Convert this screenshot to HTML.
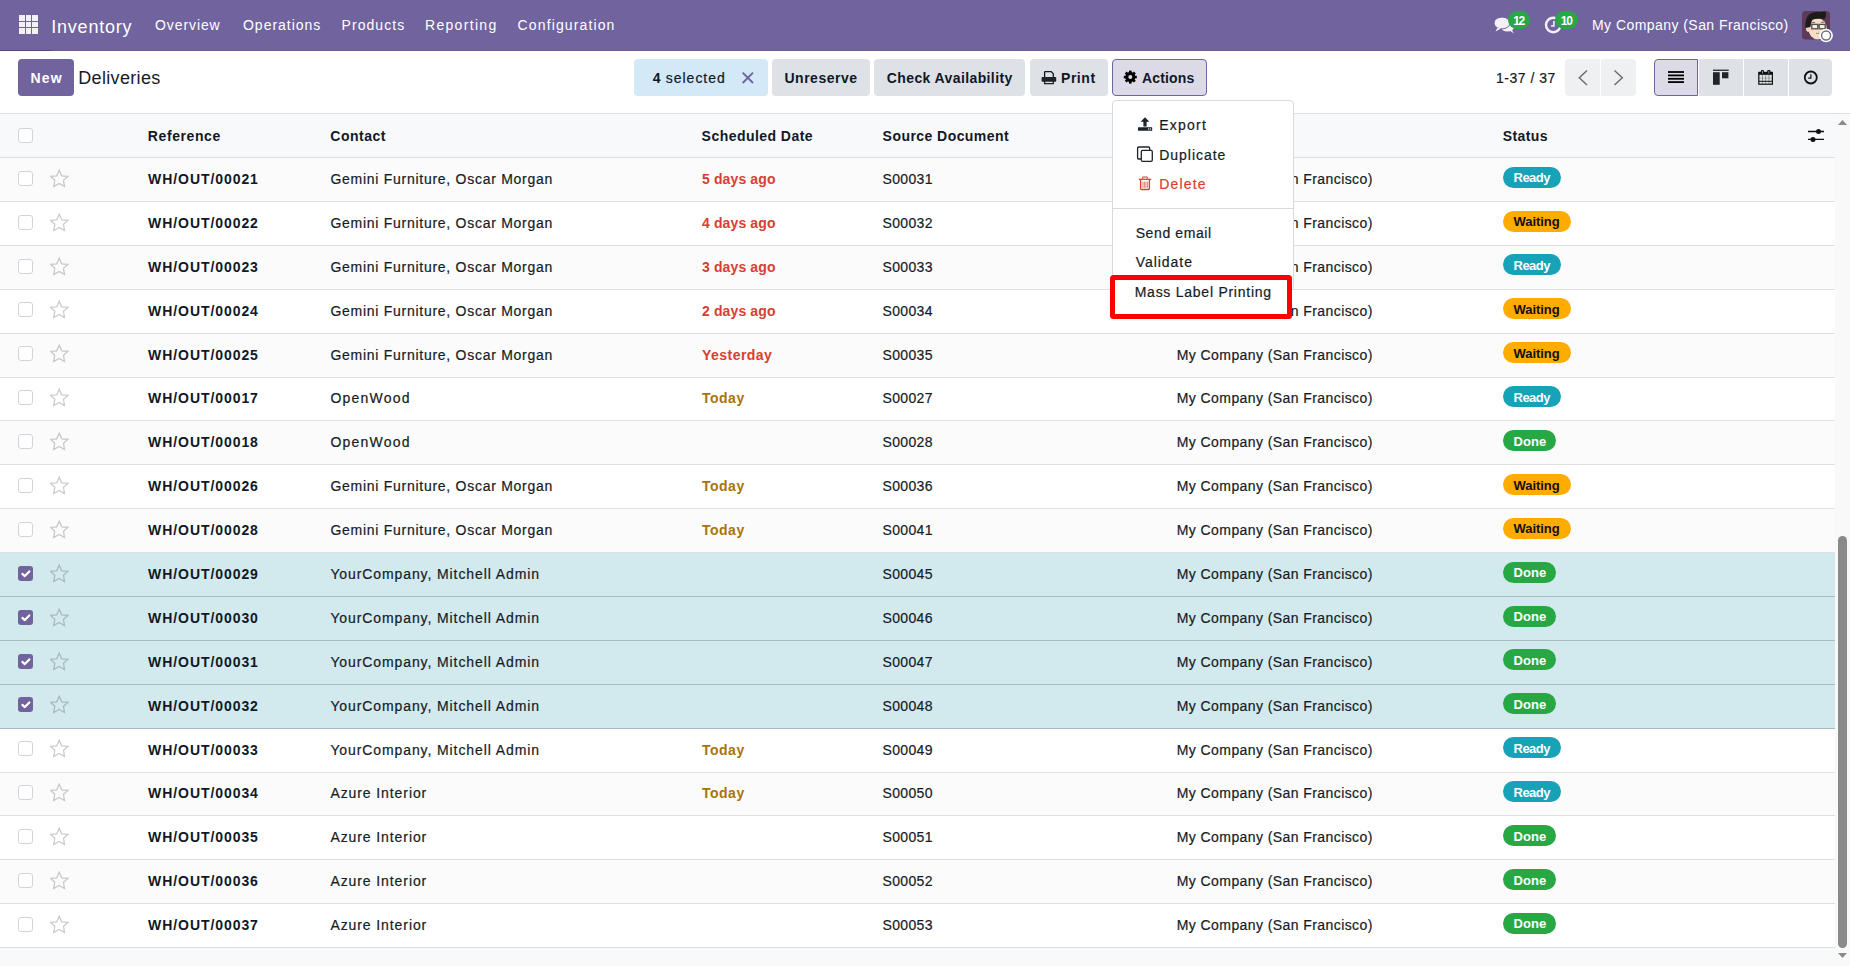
<!DOCTYPE html>
<html><head><meta charset="utf-8"><style>
html,body{margin:0;padding:0;width:1850px;height:966px;overflow:hidden;background:#fff;font-family:'Liberation Sans', sans-serif;}
</style></head><body>
<div style="position:absolute;left:0;top:0;width:1850px;height:50px;background:#71639e"></div>
<div style="position:absolute;left:0;top:50px;width:1850px;height:1px;background:#6a5b99"></div>
<div style="position:absolute;left:0;top:50px;width:52px;height:1px;background:#54477a"></div>
<div style="position:absolute;left:19.1px;top:15.0px;width:5.8px;height:5.8px;background:#f3f1f8"></div>
<div style="position:absolute;left:25.7px;top:15.0px;width:5.8px;height:5.8px;background:#f3f1f8"></div>
<div style="position:absolute;left:32.3px;top:15.0px;width:5.8px;height:5.8px;background:#f3f1f8"></div>
<div style="position:absolute;left:19.1px;top:21.5px;width:5.8px;height:5.8px;background:#f3f1f8"></div>
<div style="position:absolute;left:25.7px;top:21.5px;width:5.8px;height:5.8px;background:#f3f1f8"></div>
<div style="position:absolute;left:32.3px;top:21.5px;width:5.8px;height:5.8px;background:#f3f1f8"></div>
<div style="position:absolute;left:19.1px;top:28.0px;width:5.8px;height:5.8px;background:#f3f1f8"></div>
<div style="position:absolute;left:25.7px;top:28.0px;width:5.8px;height:5.8px;background:#f3f1f8"></div>
<div style="position:absolute;left:32.3px;top:28.0px;width:5.8px;height:5.8px;background:#f3f1f8"></div>
<div style="position:absolute;left:0;top:113px;width:1850px;height:1px;background:#dcdfe4"></div>
<div style="position:absolute;left:18px;top:59px;width:56px;height:37px;background:#71639e;border-radius:4px"></div>
<div style="position:absolute;left:634px;top:59px;width:134px;height:37px;background:#d3e9f8;border-radius:4px"></div>
<div style="position:absolute;left:772px;top:59px;width:98px;height:37px;background:#dee1e5;border-radius:4px"></div>
<div style="position:absolute;left:874px;top:59px;width:151px;height:37px;background:#dee1e5;border-radius:4px"></div>
<div style="position:absolute;left:1030px;top:59px;width:78px;height:37px;background:#dee1e5;border-radius:4px"></div>
<div style="position:absolute;left:1112px;top:59px;width:93px;height:35px;background:#dddae7;border:1px solid #71639e;border-radius:4px"></div>
<div style="position:absolute;left:1565px;top:59px;width:35px;height:37px;background:#eef0f2;border-radius:4px 0 0 4px"></div>
<div style="position:absolute;left:1601px;top:59px;width:35px;height:37px;background:#eef0f2;border-radius:0 4px 4px 0"></div>
<div style="position:absolute;left:1654px;top:59px;width:42px;height:35px;background:#dddae7;border:1px solid #71639e;border-radius:4px 0 0 4px"></div>
<div style="position:absolute;left:1699px;top:59px;width:44px;height:37px;background:#dee1e5"></div>
<div style="position:absolute;left:1744px;top:59px;width:44px;height:37px;background:#dee1e5"></div>
<div style="position:absolute;left:1789px;top:59px;width:43px;height:37px;background:#dee1e5;border-radius:0 4px 4px 0"></div>
<div style="position:absolute;left:0;top:114px;width:1835px;height:43px;background:#f8f9fa"></div>
<div style="position:absolute;left:0;top:157px;width:1835px;height:1px;background:#dcdfe4"></div>
<div style="position:absolute;left:0;top:158px;width:1835px;height:43px;background:#fbfbfc"></div>
<div style="position:absolute;left:0;top:201px;width:1835px;height:1px;background:#dcdfe4"></div>
<div style="position:absolute;left:18px;top:171px;width:13px;height:13px;border:1px solid #d1d5db;border-radius:3px;background:#fff"></div>
<div style="position:absolute;left:50px;top:169px;width:19px;height:19px"><svg style="display:block" width="19" height="19" viewBox="0 0 19 19"><path d="M9.2 1.2 L11.7 6.8 L17.8 7.4 L13.5 11.3 L14.5 17.6 L9.2 14.5 L3.7 17.6 L4.8 11.3 L0.7 7.4 L6.7 6.8 Z" fill="none" stroke="rgba(0,0,0,0.2)" stroke-width="1.3" stroke-linejoin="miter"/></svg></div>
<div style="position:absolute;left:1503px;top:167px;width:58px;height:21px;background:#17a2b8;border-radius:11px"></div>
<div style="position:absolute;left:0;top:202px;width:1835px;height:43px;background:#ffffff"></div>
<div style="position:absolute;left:0;top:245px;width:1835px;height:1px;background:#dcdfe4"></div>
<div style="position:absolute;left:18px;top:215px;width:13px;height:13px;border:1px solid #d1d5db;border-radius:3px;background:#fff"></div>
<div style="position:absolute;left:50px;top:213px;width:19px;height:19px"><svg style="display:block" width="19" height="19" viewBox="0 0 19 19"><path d="M9.2 1.2 L11.7 6.8 L17.8 7.4 L13.5 11.3 L14.5 17.6 L9.2 14.5 L3.7 17.6 L4.8 11.3 L0.7 7.4 L6.7 6.8 Z" fill="none" stroke="rgba(0,0,0,0.2)" stroke-width="1.3" stroke-linejoin="miter"/></svg></div>
<div style="position:absolute;left:1503px;top:211px;width:68px;height:21px;background:#ffac00;border-radius:11px"></div>
<div style="position:absolute;left:0;top:246px;width:1835px;height:43px;background:#fbfbfc"></div>
<div style="position:absolute;left:0;top:289px;width:1835px;height:1px;background:#dcdfe4"></div>
<div style="position:absolute;left:18px;top:259px;width:13px;height:13px;border:1px solid #d1d5db;border-radius:3px;background:#fff"></div>
<div style="position:absolute;left:50px;top:257px;width:19px;height:19px"><svg style="display:block" width="19" height="19" viewBox="0 0 19 19"><path d="M9.2 1.2 L11.7 6.8 L17.8 7.4 L13.5 11.3 L14.5 17.6 L9.2 14.5 L3.7 17.6 L4.8 11.3 L0.7 7.4 L6.7 6.8 Z" fill="none" stroke="rgba(0,0,0,0.2)" stroke-width="1.3" stroke-linejoin="miter"/></svg></div>
<div style="position:absolute;left:1503px;top:254px;width:58px;height:21px;background:#17a2b8;border-radius:11px"></div>
<div style="position:absolute;left:0;top:290px;width:1835px;height:43px;background:#ffffff"></div>
<div style="position:absolute;left:0;top:333px;width:1835px;height:1px;background:#dcdfe4"></div>
<div style="position:absolute;left:18px;top:302px;width:13px;height:13px;border:1px solid #d1d5db;border-radius:3px;background:#fff"></div>
<div style="position:absolute;left:50px;top:300px;width:19px;height:19px"><svg style="display:block" width="19" height="19" viewBox="0 0 19 19"><path d="M9.2 1.2 L11.7 6.8 L17.8 7.4 L13.5 11.3 L14.5 17.6 L9.2 14.5 L3.7 17.6 L4.8 11.3 L0.7 7.4 L6.7 6.8 Z" fill="none" stroke="rgba(0,0,0,0.2)" stroke-width="1.3" stroke-linejoin="miter"/></svg></div>
<div style="position:absolute;left:1503px;top:298px;width:68px;height:21px;background:#ffac00;border-radius:11px"></div>
<div style="position:absolute;left:0;top:334px;width:1835px;height:43px;background:#fbfbfc"></div>
<div style="position:absolute;left:0;top:377px;width:1835px;height:1px;background:#dcdfe4"></div>
<div style="position:absolute;left:18px;top:346px;width:13px;height:13px;border:1px solid #d1d5db;border-radius:3px;background:#fff"></div>
<div style="position:absolute;left:50px;top:344px;width:19px;height:19px"><svg style="display:block" width="19" height="19" viewBox="0 0 19 19"><path d="M9.2 1.2 L11.7 6.8 L17.8 7.4 L13.5 11.3 L14.5 17.6 L9.2 14.5 L3.7 17.6 L4.8 11.3 L0.7 7.4 L6.7 6.8 Z" fill="none" stroke="rgba(0,0,0,0.2)" stroke-width="1.3" stroke-linejoin="miter"/></svg></div>
<div style="position:absolute;left:1503px;top:342px;width:68px;height:21px;background:#ffac00;border-radius:11px"></div>
<div style="position:absolute;left:0;top:378px;width:1835px;height:42px;background:#ffffff"></div>
<div style="position:absolute;left:0;top:420px;width:1835px;height:1px;background:#dcdfe4"></div>
<div style="position:absolute;left:18px;top:390px;width:13px;height:13px;border:1px solid #d1d5db;border-radius:3px;background:#fff"></div>
<div style="position:absolute;left:50px;top:388px;width:19px;height:19px"><svg style="display:block" width="19" height="19" viewBox="0 0 19 19"><path d="M9.2 1.2 L11.7 6.8 L17.8 7.4 L13.5 11.3 L14.5 17.6 L9.2 14.5 L3.7 17.6 L4.8 11.3 L0.7 7.4 L6.7 6.8 Z" fill="none" stroke="rgba(0,0,0,0.2)" stroke-width="1.3" stroke-linejoin="miter"/></svg></div>
<div style="position:absolute;left:1503px;top:386px;width:58px;height:21px;background:#17a2b8;border-radius:11px"></div>
<div style="position:absolute;left:0;top:421px;width:1835px;height:43px;background:#fbfbfc"></div>
<div style="position:absolute;left:0;top:464px;width:1835px;height:1px;background:#dcdfe4"></div>
<div style="position:absolute;left:18px;top:434px;width:13px;height:13px;border:1px solid #d1d5db;border-radius:3px;background:#fff"></div>
<div style="position:absolute;left:50px;top:432px;width:19px;height:19px"><svg style="display:block" width="19" height="19" viewBox="0 0 19 19"><path d="M9.2 1.2 L11.7 6.8 L17.8 7.4 L13.5 11.3 L14.5 17.6 L9.2 14.5 L3.7 17.6 L4.8 11.3 L0.7 7.4 L6.7 6.8 Z" fill="none" stroke="rgba(0,0,0,0.2)" stroke-width="1.3" stroke-linejoin="miter"/></svg></div>
<div style="position:absolute;left:1503px;top:430px;width:53px;height:21px;background:#28a745;border-radius:11px"></div>
<div style="position:absolute;left:0;top:465px;width:1835px;height:43px;background:#ffffff"></div>
<div style="position:absolute;left:0;top:508px;width:1835px;height:1px;background:#dcdfe4"></div>
<div style="position:absolute;left:18px;top:478px;width:13px;height:13px;border:1px solid #d1d5db;border-radius:3px;background:#fff"></div>
<div style="position:absolute;left:50px;top:476px;width:19px;height:19px"><svg style="display:block" width="19" height="19" viewBox="0 0 19 19"><path d="M9.2 1.2 L11.7 6.8 L17.8 7.4 L13.5 11.3 L14.5 17.6 L9.2 14.5 L3.7 17.6 L4.8 11.3 L0.7 7.4 L6.7 6.8 Z" fill="none" stroke="rgba(0,0,0,0.2)" stroke-width="1.3" stroke-linejoin="miter"/></svg></div>
<div style="position:absolute;left:1503px;top:474px;width:68px;height:21px;background:#ffac00;border-radius:11px"></div>
<div style="position:absolute;left:0;top:509px;width:1835px;height:43px;background:#fbfbfc"></div>
<div style="position:absolute;left:0;top:552px;width:1835px;height:1px;background:#dcdfe4"></div>
<div style="position:absolute;left:18px;top:522px;width:13px;height:13px;border:1px solid #d1d5db;border-radius:3px;background:#fff"></div>
<div style="position:absolute;left:50px;top:520px;width:19px;height:19px"><svg style="display:block" width="19" height="19" viewBox="0 0 19 19"><path d="M9.2 1.2 L11.7 6.8 L17.8 7.4 L13.5 11.3 L14.5 17.6 L9.2 14.5 L3.7 17.6 L4.8 11.3 L0.7 7.4 L6.7 6.8 Z" fill="none" stroke="rgba(0,0,0,0.2)" stroke-width="1.3" stroke-linejoin="miter"/></svg></div>
<div style="position:absolute;left:1503px;top:518px;width:68px;height:21px;background:#ffac00;border-radius:11px"></div>
<div style="position:absolute;left:0;top:553px;width:1835px;height:43px;background:#d2e9ee"></div>
<div style="position:absolute;left:0;top:596px;width:1835px;height:1px;background:#a6bcc2"></div>
<div style="position:absolute;left:18px;top:566px;width:15px;height:15px;background:#71639e;border-radius:3px"><svg style="display:block" width="15" height="15" viewBox="0 0 15 15"><path d="M4.4 7.9 L6.8 10.1 L11.3 5.4" fill="none" stroke="#fff" stroke-width="2.2" stroke-linecap="round" stroke-linejoin="round"/></svg></div>
<div style="position:absolute;left:50px;top:564px;width:19px;height:19px"><svg style="display:block" width="19" height="19" viewBox="0 0 19 19"><path d="M9.2 1.2 L11.7 6.8 L17.8 7.4 L13.5 11.3 L14.5 17.6 L9.2 14.5 L3.7 17.6 L4.8 11.3 L0.7 7.4 L6.7 6.8 Z" fill="none" stroke="rgba(0,0,0,0.2)" stroke-width="1.3" stroke-linejoin="miter"/></svg></div>
<div style="position:absolute;left:1503px;top:562px;width:53px;height:21px;background:#28a745;border-radius:11px"></div>
<div style="position:absolute;left:0;top:597px;width:1835px;height:43px;background:#d2e9ee"></div>
<div style="position:absolute;left:0;top:640px;width:1835px;height:1px;background:#a6bcc2"></div>
<div style="position:absolute;left:18px;top:610px;width:15px;height:15px;background:#71639e;border-radius:3px"><svg style="display:block" width="15" height="15" viewBox="0 0 15 15"><path d="M4.4 7.9 L6.8 10.1 L11.3 5.4" fill="none" stroke="#fff" stroke-width="2.2" stroke-linecap="round" stroke-linejoin="round"/></svg></div>
<div style="position:absolute;left:50px;top:608px;width:19px;height:19px"><svg style="display:block" width="19" height="19" viewBox="0 0 19 19"><path d="M9.2 1.2 L11.7 6.8 L17.8 7.4 L13.5 11.3 L14.5 17.6 L9.2 14.5 L3.7 17.6 L4.8 11.3 L0.7 7.4 L6.7 6.8 Z" fill="none" stroke="rgba(0,0,0,0.2)" stroke-width="1.3" stroke-linejoin="miter"/></svg></div>
<div style="position:absolute;left:1503px;top:606px;width:53px;height:21px;background:#28a745;border-radius:11px"></div>
<div style="position:absolute;left:0;top:641px;width:1835px;height:43px;background:#d2e9ee"></div>
<div style="position:absolute;left:0;top:684px;width:1835px;height:1px;background:#a6bcc2"></div>
<div style="position:absolute;left:18px;top:654px;width:15px;height:15px;background:#71639e;border-radius:3px"><svg style="display:block" width="15" height="15" viewBox="0 0 15 15"><path d="M4.4 7.9 L6.8 10.1 L11.3 5.4" fill="none" stroke="#fff" stroke-width="2.2" stroke-linecap="round" stroke-linejoin="round"/></svg></div>
<div style="position:absolute;left:50px;top:652px;width:19px;height:19px"><svg style="display:block" width="19" height="19" viewBox="0 0 19 19"><path d="M9.2 1.2 L11.7 6.8 L17.8 7.4 L13.5 11.3 L14.5 17.6 L9.2 14.5 L3.7 17.6 L4.8 11.3 L0.7 7.4 L6.7 6.8 Z" fill="none" stroke="rgba(0,0,0,0.2)" stroke-width="1.3" stroke-linejoin="miter"/></svg></div>
<div style="position:absolute;left:1503px;top:649px;width:53px;height:21px;background:#28a745;border-radius:11px"></div>
<div style="position:absolute;left:0;top:685px;width:1835px;height:43px;background:#d2e9ee"></div>
<div style="position:absolute;left:0;top:728px;width:1835px;height:1px;background:#a6bcc2"></div>
<div style="position:absolute;left:18px;top:697px;width:15px;height:15px;background:#71639e;border-radius:3px"><svg style="display:block" width="15" height="15" viewBox="0 0 15 15"><path d="M4.4 7.9 L6.8 10.1 L11.3 5.4" fill="none" stroke="#fff" stroke-width="2.2" stroke-linecap="round" stroke-linejoin="round"/></svg></div>
<div style="position:absolute;left:50px;top:695px;width:19px;height:19px"><svg style="display:block" width="19" height="19" viewBox="0 0 19 19"><path d="M9.2 1.2 L11.7 6.8 L17.8 7.4 L13.5 11.3 L14.5 17.6 L9.2 14.5 L3.7 17.6 L4.8 11.3 L0.7 7.4 L6.7 6.8 Z" fill="none" stroke="rgba(0,0,0,0.2)" stroke-width="1.3" stroke-linejoin="miter"/></svg></div>
<div style="position:absolute;left:1503px;top:693px;width:53px;height:21px;background:#28a745;border-radius:11px"></div>
<div style="position:absolute;left:0;top:729px;width:1835px;height:43px;background:#ffffff"></div>
<div style="position:absolute;left:0;top:772px;width:1835px;height:1px;background:#dcdfe4"></div>
<div style="position:absolute;left:18px;top:741px;width:13px;height:13px;border:1px solid #d1d5db;border-radius:3px;background:#fff"></div>
<div style="position:absolute;left:50px;top:739px;width:19px;height:19px"><svg style="display:block" width="19" height="19" viewBox="0 0 19 19"><path d="M9.2 1.2 L11.7 6.8 L17.8 7.4 L13.5 11.3 L14.5 17.6 L9.2 14.5 L3.7 17.6 L4.8 11.3 L0.7 7.4 L6.7 6.8 Z" fill="none" stroke="rgba(0,0,0,0.2)" stroke-width="1.3" stroke-linejoin="miter"/></svg></div>
<div style="position:absolute;left:1503px;top:737px;width:58px;height:21px;background:#17a2b8;border-radius:11px"></div>
<div style="position:absolute;left:0;top:773px;width:1835px;height:42px;background:#fbfbfc"></div>
<div style="position:absolute;left:0;top:815px;width:1835px;height:1px;background:#dcdfe4"></div>
<div style="position:absolute;left:18px;top:785px;width:13px;height:13px;border:1px solid #d1d5db;border-radius:3px;background:#fff"></div>
<div style="position:absolute;left:50px;top:783px;width:19px;height:19px"><svg style="display:block" width="19" height="19" viewBox="0 0 19 19"><path d="M9.2 1.2 L11.7 6.8 L17.8 7.4 L13.5 11.3 L14.5 17.6 L9.2 14.5 L3.7 17.6 L4.8 11.3 L0.7 7.4 L6.7 6.8 Z" fill="none" stroke="rgba(0,0,0,0.2)" stroke-width="1.3" stroke-linejoin="miter"/></svg></div>
<div style="position:absolute;left:1503px;top:781px;width:58px;height:21px;background:#17a2b8;border-radius:11px"></div>
<div style="position:absolute;left:0;top:816px;width:1835px;height:43px;background:#ffffff"></div>
<div style="position:absolute;left:0;top:859px;width:1835px;height:1px;background:#dcdfe4"></div>
<div style="position:absolute;left:18px;top:829px;width:13px;height:13px;border:1px solid #d1d5db;border-radius:3px;background:#fff"></div>
<div style="position:absolute;left:50px;top:827px;width:19px;height:19px"><svg style="display:block" width="19" height="19" viewBox="0 0 19 19"><path d="M9.2 1.2 L11.7 6.8 L17.8 7.4 L13.5 11.3 L14.5 17.6 L9.2 14.5 L3.7 17.6 L4.8 11.3 L0.7 7.4 L6.7 6.8 Z" fill="none" stroke="rgba(0,0,0,0.2)" stroke-width="1.3" stroke-linejoin="miter"/></svg></div>
<div style="position:absolute;left:1503px;top:825px;width:53px;height:21px;background:#28a745;border-radius:11px"></div>
<div style="position:absolute;left:0;top:860px;width:1835px;height:43px;background:#fbfbfc"></div>
<div style="position:absolute;left:0;top:903px;width:1835px;height:1px;background:#dcdfe4"></div>
<div style="position:absolute;left:18px;top:873px;width:13px;height:13px;border:1px solid #d1d5db;border-radius:3px;background:#fff"></div>
<div style="position:absolute;left:50px;top:871px;width:19px;height:19px"><svg style="display:block" width="19" height="19" viewBox="0 0 19 19"><path d="M9.2 1.2 L11.7 6.8 L17.8 7.4 L13.5 11.3 L14.5 17.6 L9.2 14.5 L3.7 17.6 L4.8 11.3 L0.7 7.4 L6.7 6.8 Z" fill="none" stroke="rgba(0,0,0,0.2)" stroke-width="1.3" stroke-linejoin="miter"/></svg></div>
<div style="position:absolute;left:1503px;top:869px;width:53px;height:21px;background:#28a745;border-radius:11px"></div>
<div style="position:absolute;left:0;top:904px;width:1835px;height:43px;background:#ffffff"></div>
<div style="position:absolute;left:0;top:947px;width:1835px;height:1px;background:#dcdfe4"></div>
<div style="position:absolute;left:18px;top:917px;width:13px;height:13px;border:1px solid #d1d5db;border-radius:3px;background:#fff"></div>
<div style="position:absolute;left:50px;top:915px;width:19px;height:19px"><svg style="display:block" width="19" height="19" viewBox="0 0 19 19"><path d="M9.2 1.2 L11.7 6.8 L17.8 7.4 L13.5 11.3 L14.5 17.6 L9.2 14.5 L3.7 17.6 L4.8 11.3 L0.7 7.4 L6.7 6.8 Z" fill="none" stroke="rgba(0,0,0,0.2)" stroke-width="1.3" stroke-linejoin="miter"/></svg></div>
<div style="position:absolute;left:1503px;top:913px;width:53px;height:21px;background:#28a745;border-radius:11px"></div>
<div style="position:absolute;left:0;top:948px;width:1835px;height:18px;background:#f8f9fa"></div>
<div style="position:absolute;left:18px;top:128px;width:13px;height:13px;border:1px solid #d1d5db;border-radius:3px;background:#fff"></div>
<div style="position:absolute;left:1835px;top:114px;width:15px;height:852px;background:#f9f9f9"></div>
<div style="position:absolute;left:1838px;top:536px;width:9px;height:412px;background:#8a8a8a;border-radius:5px"></div>
<svg style="position:absolute;left:1837px;top:119px" width="11" height="7"><path d="M1 6 L5.5 1 L10 6 Z" fill="#8a8a8a"/></svg>
<svg style="position:absolute;left:1837px;top:952px" width="11" height="7"><path d="M1 1 L5.5 6 L10 1 Z" fill="#8a8a8a"/></svg>
<div style="position:absolute;left:1112px;top:100px;width:182px;height:190px;box-sizing:border-box;background:#fff;border:1px solid #d8dadd;border-radius:4px;z-index:20"></div>
<div style="position:absolute;left:1113px;top:208px;width:180px;height:1px;background:#d8dadd;z-index:21"></div>
<div style="position:absolute;left:1109.5px;top:274.8px;width:182.6px;height:44.5px;box-sizing:border-box;border:5px solid #ff0000;border-radius:3.5px;background:#fff;z-index:21"></div>
<svg style="position:absolute;left:1492px;top:15px;z-index:6" width="24" height="20" viewBox="0 0 24 20"><ellipse cx="15.5" cy="12" rx="6.6" ry="4.6" fill="#f3f1f8"/><path d="M17 15 L21.8 18.6 L19.5 14 Z" fill="#f3f1f8"/><ellipse cx="10" cy="8" rx="8" ry="5.9" fill="#f3f1f8" stroke="#71639e" stroke-width="1"/><path d="M5.5 12.5 L3.6 16.4 L9 13.6 Z" fill="#f3f1f8"/></svg>
<div style="position:absolute;left:1508px;top:11px;width:22px;height:18px;border-radius:9px;background:#28a745;z-index:7"></div>
<svg style="position:absolute;left:1543px;top:15px;z-index:6" width="22" height="20" viewBox="0 0 22 20"><circle cx="10.3" cy="10" r="7.3" fill="none" stroke="#f3f1f8" stroke-width="2.4"/><path d="M10.9 6 L10.9 11 L8 11" fill="none" stroke="#f3f1f8" stroke-width="1.6"/></svg>
<div style="position:absolute;left:1554.9px;top:11px;width:23px;height:18px;border-radius:9px;background:#28a745;z-index:7"></div>
<svg style="position:absolute;left:1802px;top:11px;z-index:7" width="34" height="34" viewBox="0 0 34 34"><defs><clipPath id="av"><rect x="0" y="0" width="28" height="28.7" rx="4"/></clipPath></defs><g clip-path="url(#av)"><rect x="0" y="0" width="28" height="28.7" fill="#5d3b58"/><ellipse cx="15.6" cy="17.8" rx="9.1" ry="10.6" fill="#f7dcc6"/><ellipse cx="6.2" cy="17.6" rx="2.2" ry="3.3" fill="#f3d3bd"/><path d="M3.6 17 C2.8 9 5 3.5 11 1.6 C16 0.4 21 1.5 23.2 0.2 C24.6 2.6 24.2 6 22.5 8.2 C18 7.5 13 8 10 8.8 L8.4 16 Z" fill="#1c1c1c"/><path d="M9.8 11.6 H13 M19 11.2 H22" stroke="#5a3b3b" stroke-width="0.8"/><rect x="9.8" y="13.4" width="6" height="4.4" fill="#fbefe6" stroke="#4f4f4f" stroke-width="1.3"/><rect x="17.2" y="13.4" width="6" height="4.4" fill="#fbefe6" stroke="#4f4f4f" stroke-width="1.3"/><path d="M15.8 15 H17.2" stroke="#4f4f4f" stroke-width="1.2"/><path d="M14 22 Q15.5 23 17.2 22" stroke="#8a6a6a" stroke-width="0.8" fill="none"/></g><circle cx="24.1" cy="24.5" r="6.8" fill="#ffffff"/><circle cx="24.1" cy="24.5" r="4.5" fill="#ffffff" stroke="#6b7280" stroke-width="1.4"/></svg>
<svg style="position:absolute;left:740px;top:70px;z-index:6" width="16" height="16" viewBox="0 0 16 16"><path d="M2.7 2.7 L13 13 M13 2.7 L2.7 13" stroke="#71639e" stroke-width="1.9"/></svg>
<svg style="position:absolute;left:1041px;top:70px;z-index:6" width="16" height="15" viewBox="0 0 16 15"><path d="M3.6 1.6 H10.2 L12.3 3.7 V7 M3.6 7 V1.6" fill="none" stroke="#111827" stroke-width="1.3"/><rect x="0.6" y="7" width="14.6" height="4.8" rx="0.8" fill="#1f2329"/><path d="M3.6 10.6 V13.6 H12.3 V10.6" fill="none" stroke="#1f2329" stroke-width="1.3"/></svg>
<svg style="position:absolute;left:1123px;top:70px;z-index:6" width="15" height="15" viewBox="0 0 15 15"><rect x="6" y="0.6" width="2.6" height="13" fill="#000" transform="rotate(0 7.3 7.1)"/><rect x="6" y="0.6" width="2.6" height="13" fill="#000" transform="rotate(45 7.3 7.1)"/><rect x="6" y="0.6" width="2.6" height="13" fill="#000" transform="rotate(90 7.3 7.1)"/><rect x="6" y="0.6" width="2.6" height="13" fill="#000" transform="rotate(135 7.3 7.1)"/><circle cx="7.3" cy="7.1" r="5" fill="#000"/><circle cx="7.3" cy="7.1" r="2" fill="#dddae7"/></svg>
<svg style="position:absolute;left:1576px;top:68px;z-index:6" width="14" height="19" viewBox="0 0 14 19"><path d="M11 2.5 L3.3 9.7 L11 17" fill="none" stroke="#6f6f6f" stroke-width="1.5"/></svg>
<svg style="position:absolute;left:1611px;top:68px;z-index:6" width="14" height="19" viewBox="0 0 14 19"><path d="M3.5 2.5 L11.3 9.7 L3.5 17" fill="none" stroke="#6f6f6f" stroke-width="1.5"/></svg>
<svg style="position:absolute;left:1667px;top:70px;z-index:6" width="18" height="14" viewBox="0 0 18 14"><rect x="1" y="1.1" width="16" height="1.8" fill="#000"/><rect x="1" y="4.5" width="16" height="1.8" fill="#000"/><rect x="1" y="7.9" width="16" height="1.8" fill="#000"/><rect x="1" y="11.2" width="16" height="1.8" fill="#000"/></svg>
<svg style="position:absolute;left:1712px;top:69px;z-index:6" width="18" height="17" viewBox="0 0 18 17"><rect x="1" y="0.6" width="15.7" height="1.3" fill="#212529"/><rect x="1" y="3.2" width="6.7" height="12.6" fill="#212529"/><rect x="10" y="3.2" width="6.4" height="6.1" fill="#212529"/></svg>
<svg style="position:absolute;left:1758px;top:70px;z-index:6" width="16" height="16" viewBox="0 0 16 16"><rect x="0.8" y="2.4" width="13.6" height="11.8" fill="none" stroke="#111" stroke-width="1.2"/><rect x="0.8" y="2.4" width="13.6" height="2.4" fill="#111"/><rect x="2.9" y="-0.2" width="3" height="4.4" rx="1.4" fill="#111"/><rect x="9.2" y="-0.2" width="3.3" height="4.4" rx="1.4" fill="#111"/><rect x="4.1" y="0.9" width="0.7" height="2.6" fill="#c9c4b0"/><rect x="10.5" y="0.9" width="0.7" height="2.6" fill="#9cc0e0"/><rect x="4.2" y="4.8" width="0.7" height="9" fill="#111" opacity="0.5"/><rect x="7.4" y="4.8" width="0.7" height="9" fill="#111" opacity="0.5"/><rect x="10.6" y="4.8" width="0.7" height="9" fill="#111" opacity="0.5"/><rect x="0.8" y="10.8" width="13.6" height="1" fill="#111"/><rect x="0.8" y="7.8" width="13.6" height="0.6" fill="#111" opacity="0.35"/></svg>
<svg style="position:absolute;left:1803px;top:70px;z-index:6" width="16" height="16" viewBox="0 0 16 16"><circle cx="7.8" cy="7.5" r="6" fill="none" stroke="#111" stroke-width="1.8"/><path d="M7.9 4.3 V8.1 H5.2" fill="none" stroke="#111" stroke-width="1.2"/></svg>
<svg style="position:absolute;left:1806px;top:127px;z-index:6" width="20" height="16" viewBox="0 0 20 16"><path d="M2 4.5 H18 M2 12.4 H18" stroke="#111" stroke-width="1.3"/><circle cx="12.5" cy="4.5" r="2.5" fill="#111"/><circle cx="7" cy="12.4" r="2.5" fill="#111"/></svg>
<svg style="position:absolute;left:1137px;top:116px;z-index:23" width="17" height="16" viewBox="0 0 17 16"><path d="M3.6 5.8 L8 1.3 L12.4 5.8 H9.6 V10.6 H6.4 V5.8 Z" fill="#1f2329"/><rect x="1" y="11.2" width="14.2" height="3.6" rx="0.5" fill="#1f2329"/><circle cx="11.6" cy="13" r="0.65" fill="#fff"/><circle cx="13.4" cy="13" r="0.65" fill="#fff"/></svg>
<svg style="position:absolute;left:1136px;top:146px;z-index:23" width="18" height="18" viewBox="0 0 18 18"><path d="M5 13 H2.9 Q1.6 13 1.6 11.7 V2.3 Q1.6 1 2.9 1 H12.4 Q13.7 1 13.7 2.3 V4.4" fill="none" stroke="#1f2329" stroke-width="1.3"/><rect x="5.3" y="4.4" width="11" height="11" rx="1.3" fill="#fff" stroke="#1f2329" stroke-width="1.3"/></svg>
<svg style="position:absolute;left:1138px;top:176px;z-index:23" width="15" height="15" viewBox="0 0 15 15"><path d="M4.6 2.6 V1.8 Q4.6 1 5.4 1 H8.6 Q9.4 1 9.4 1.8 V2.6" fill="none" stroke="#d6402f" stroke-width="1.2"/><path d="M0.8 3.3 H13.2" stroke="#d6402f" stroke-width="1.3"/><path d="M2.6 3.6 V12.5 Q2.6 13.5 3.6 13.5 H10.4 Q11.4 13.5 11.4 12.5 V3.6" fill="none" stroke="#d6402f" stroke-width="1.3"/><path d="M4.9 5.6 V11.8 M6.4 5.6 V11.8 M7.9 5.6 V11.8 M9.4 5.6 V11.8" stroke="#d6402f" stroke-width="0.65"/></svg>
<div style="position:absolute;left:51.30px;top:18px;font:400 18px 'Liberation Sans', sans-serif;line-height:18px;color:#ffffff;letter-spacing:0.770px;white-space:nowrap;z-index:5;">Inventory</div>
<div style="position:absolute;left:155.00px;top:18px;font:400 14px 'Liberation Sans', sans-serif;line-height:14px;color:#ffffff;letter-spacing:0.909px;white-space:nowrap;z-index:5;">Overview</div>
<div style="position:absolute;left:243.00px;top:18px;font:400 14px 'Liberation Sans', sans-serif;line-height:14px;color:#ffffff;letter-spacing:0.980px;white-space:nowrap;z-index:5;">Operations</div>
<div style="position:absolute;left:341.50px;top:18px;font:400 14px 'Liberation Sans', sans-serif;line-height:14px;color:#ffffff;letter-spacing:1.065px;white-space:nowrap;z-index:5;">Products</div>
<div style="position:absolute;left:425.00px;top:18px;font:400 14px 'Liberation Sans', sans-serif;line-height:14px;color:#ffffff;letter-spacing:1.310px;white-space:nowrap;z-index:5;">Reporting</div>
<div style="position:absolute;left:517.60px;top:18px;font:400 14px 'Liberation Sans', sans-serif;line-height:14px;color:#ffffff;letter-spacing:1.126px;white-space:nowrap;z-index:5;">Configuration</div>
<div style="position:absolute;left:1592.00px;top:18px;font:400 14px 'Liberation Sans', sans-serif;line-height:14px;color:#ffffff;letter-spacing:0.444px;white-space:nowrap;z-index:5;">My Company (San Francisco)</div>
<div style="position:absolute;left:30.50px;top:71px;font:700 14px 'Liberation Sans', sans-serif;line-height:14px;color:#ffffff;letter-spacing:1.202px;white-space:nowrap;z-index:5;">New</div>
<div style="position:absolute;left:78.20px;top:69px;font:400 18px 'Liberation Sans', sans-serif;line-height:18px;color:#161b26;letter-spacing:0.342px;white-space:nowrap;z-index:5;">Deliveries</div>
<div style="position:absolute;left:652.70px;top:71px;font:700 14px 'Liberation Sans', sans-serif;line-height:14px;color:#111827;letter-spacing:0.000px;white-space:nowrap;z-index:5;">4</div>
<div style="position:absolute;left:665.80px;top:71px;font:400 14px 'Liberation Sans', sans-serif;line-height:14px;color:#111827;letter-spacing:0.977px;white-space:nowrap;z-index:5;-webkit-text-stroke:0.2px #111827;">selected</div>
<div style="position:absolute;left:784.50px;top:71px;font:700 14px 'Liberation Sans', sans-serif;line-height:14px;color:#111827;letter-spacing:0.500px;white-space:nowrap;z-index:5;">Unreserve</div>
<div style="position:absolute;left:886.80px;top:71px;font:700 14px 'Liberation Sans', sans-serif;line-height:14px;color:#111827;letter-spacing:0.393px;white-space:nowrap;z-index:5;">Check Availability</div>
<div style="position:absolute;left:1061.00px;top:71px;font:700 14px 'Liberation Sans', sans-serif;line-height:14px;color:#111827;letter-spacing:0.543px;white-space:nowrap;z-index:5;">Print</div>
<div style="position:absolute;left:1142.00px;top:71px;font:700 14px 'Liberation Sans', sans-serif;line-height:14px;color:#111827;letter-spacing:0.158px;white-space:nowrap;z-index:5;">Actions</div>
<div style="position:absolute;left:1496.00px;top:71px;font:400 14px 'Liberation Sans', sans-serif;line-height:14px;color:#161b26;letter-spacing:0.516px;white-space:nowrap;z-index:5;-webkit-text-stroke:0.2px #161b26;">1-37 / 37</div>
<div style="position:absolute;left:147.80px;top:129px;font:700 14px 'Liberation Sans', sans-serif;line-height:14px;color:#111827;letter-spacing:0.598px;white-space:nowrap;z-index:5;">Reference</div>
<div style="position:absolute;left:330.30px;top:129px;font:700 14px 'Liberation Sans', sans-serif;line-height:14px;color:#111827;letter-spacing:0.492px;white-space:nowrap;z-index:5;">Contact</div>
<div style="position:absolute;left:701.60px;top:129px;font:700 14px 'Liberation Sans', sans-serif;line-height:14px;color:#111827;letter-spacing:0.458px;white-space:nowrap;z-index:5;">Scheduled Date</div>
<div style="position:absolute;left:882.60px;top:129px;font:700 14px 'Liberation Sans', sans-serif;line-height:14px;color:#111827;letter-spacing:0.447px;white-space:nowrap;z-index:5;">Source Document</div>
<div style="position:absolute;left:1502.70px;top:129px;font:700 14px 'Liberation Sans', sans-serif;line-height:14px;color:#111827;letter-spacing:0.400px;white-space:nowrap;z-index:5;">Status</div>
<div style="position:absolute;left:148.10px;top:172px;font:700 14px 'Liberation Sans', sans-serif;line-height:14px;color:#111827;letter-spacing:0.927px;white-space:nowrap;z-index:5;">WH/OUT/00021</div>
<div style="position:absolute;left:330.40px;top:172px;font:400 14px 'Liberation Sans', sans-serif;line-height:14px;color:#161b26;letter-spacing:0.730px;white-space:nowrap;z-index:5;-webkit-text-stroke:0.2px #161b26;">Gemini Furniture, Oscar Morgan</div>
<div style="position:absolute;left:702.00px;top:172px;font:700 14px 'Liberation Sans', sans-serif;line-height:14px;color:#d6402f;letter-spacing:0.121px;white-space:nowrap;z-index:5;">5 days ago</div>
<div style="position:absolute;left:882.60px;top:172px;font:400 14px 'Liberation Sans', sans-serif;line-height:14px;color:#161b26;letter-spacing:0.324px;white-space:nowrap;z-index:5;-webkit-text-stroke:0.2px #161b26;">S00031</div>
<div style="position:absolute;left:1176.80px;top:172px;font:400 14px 'Liberation Sans', sans-serif;line-height:14px;color:#161b26;letter-spacing:0.416px;white-space:nowrap;z-index:5;-webkit-text-stroke:0.2px #161b26;">My Company (San Francisco)</div>
<div style="position:absolute;left:1513.50px;top:171px;font:700 13px 'Liberation Sans', sans-serif;line-height:13px;color:#ffffff;letter-spacing:-0.497px;white-space:nowrap;z-index:5;">Ready</div>
<div style="position:absolute;left:148.10px;top:216px;font:700 14px 'Liberation Sans', sans-serif;line-height:14px;color:#111827;letter-spacing:0.927px;white-space:nowrap;z-index:5;">WH/OUT/00022</div>
<div style="position:absolute;left:330.40px;top:216px;font:400 14px 'Liberation Sans', sans-serif;line-height:14px;color:#161b26;letter-spacing:0.730px;white-space:nowrap;z-index:5;-webkit-text-stroke:0.2px #161b26;">Gemini Furniture, Oscar Morgan</div>
<div style="position:absolute;left:702.00px;top:216px;font:700 14px 'Liberation Sans', sans-serif;line-height:14px;color:#d6402f;letter-spacing:0.121px;white-space:nowrap;z-index:5;">4 days ago</div>
<div style="position:absolute;left:882.60px;top:216px;font:400 14px 'Liberation Sans', sans-serif;line-height:14px;color:#161b26;letter-spacing:0.324px;white-space:nowrap;z-index:5;-webkit-text-stroke:0.2px #161b26;">S00032</div>
<div style="position:absolute;left:1176.80px;top:216px;font:400 14px 'Liberation Sans', sans-serif;line-height:14px;color:#161b26;letter-spacing:0.416px;white-space:nowrap;z-index:5;-webkit-text-stroke:0.2px #161b26;">My Company (San Francisco)</div>
<div style="position:absolute;left:1513.50px;top:215px;font:700 13px 'Liberation Sans', sans-serif;line-height:13px;color:#111111;letter-spacing:-0.052px;white-space:nowrap;z-index:5;">Waiting</div>
<div style="position:absolute;left:148.10px;top:260px;font:700 14px 'Liberation Sans', sans-serif;line-height:14px;color:#111827;letter-spacing:0.927px;white-space:nowrap;z-index:5;">WH/OUT/00023</div>
<div style="position:absolute;left:330.40px;top:260px;font:400 14px 'Liberation Sans', sans-serif;line-height:14px;color:#161b26;letter-spacing:0.730px;white-space:nowrap;z-index:5;-webkit-text-stroke:0.2px #161b26;">Gemini Furniture, Oscar Morgan</div>
<div style="position:absolute;left:702.00px;top:260px;font:700 14px 'Liberation Sans', sans-serif;line-height:14px;color:#d6402f;letter-spacing:0.121px;white-space:nowrap;z-index:5;">3 days ago</div>
<div style="position:absolute;left:882.60px;top:260px;font:400 14px 'Liberation Sans', sans-serif;line-height:14px;color:#161b26;letter-spacing:0.324px;white-space:nowrap;z-index:5;-webkit-text-stroke:0.2px #161b26;">S00033</div>
<div style="position:absolute;left:1176.80px;top:260px;font:400 14px 'Liberation Sans', sans-serif;line-height:14px;color:#161b26;letter-spacing:0.416px;white-space:nowrap;z-index:5;-webkit-text-stroke:0.2px #161b26;">My Company (San Francisco)</div>
<div style="position:absolute;left:1513.50px;top:259px;font:700 13px 'Liberation Sans', sans-serif;line-height:13px;color:#ffffff;letter-spacing:-0.497px;white-space:nowrap;z-index:5;">Ready</div>
<div style="position:absolute;left:148.10px;top:304px;font:700 14px 'Liberation Sans', sans-serif;line-height:14px;color:#111827;letter-spacing:0.927px;white-space:nowrap;z-index:5;">WH/OUT/00024</div>
<div style="position:absolute;left:330.40px;top:304px;font:400 14px 'Liberation Sans', sans-serif;line-height:14px;color:#161b26;letter-spacing:0.730px;white-space:nowrap;z-index:5;-webkit-text-stroke:0.2px #161b26;">Gemini Furniture, Oscar Morgan</div>
<div style="position:absolute;left:702.00px;top:304px;font:700 14px 'Liberation Sans', sans-serif;line-height:14px;color:#d6402f;letter-spacing:0.121px;white-space:nowrap;z-index:5;">2 days ago</div>
<div style="position:absolute;left:882.60px;top:304px;font:400 14px 'Liberation Sans', sans-serif;line-height:14px;color:#161b26;letter-spacing:0.324px;white-space:nowrap;z-index:5;-webkit-text-stroke:0.2px #161b26;">S00034</div>
<div style="position:absolute;left:1176.80px;top:304px;font:400 14px 'Liberation Sans', sans-serif;line-height:14px;color:#161b26;letter-spacing:0.416px;white-space:nowrap;z-index:5;-webkit-text-stroke:0.2px #161b26;">My Company (San Francisco)</div>
<div style="position:absolute;left:1513.50px;top:303px;font:700 13px 'Liberation Sans', sans-serif;line-height:13px;color:#111111;letter-spacing:-0.052px;white-space:nowrap;z-index:5;">Waiting</div>
<div style="position:absolute;left:148.10px;top:348px;font:700 14px 'Liberation Sans', sans-serif;line-height:14px;color:#111827;letter-spacing:0.927px;white-space:nowrap;z-index:5;">WH/OUT/00025</div>
<div style="position:absolute;left:330.40px;top:348px;font:400 14px 'Liberation Sans', sans-serif;line-height:14px;color:#161b26;letter-spacing:0.730px;white-space:nowrap;z-index:5;-webkit-text-stroke:0.2px #161b26;">Gemini Furniture, Oscar Morgan</div>
<div style="position:absolute;left:702.00px;top:348px;font:700 14px 'Liberation Sans', sans-serif;line-height:14px;color:#d6402f;letter-spacing:0.466px;white-space:nowrap;z-index:5;">Yesterday</div>
<div style="position:absolute;left:882.60px;top:348px;font:400 14px 'Liberation Sans', sans-serif;line-height:14px;color:#161b26;letter-spacing:0.324px;white-space:nowrap;z-index:5;-webkit-text-stroke:0.2px #161b26;">S00035</div>
<div style="position:absolute;left:1176.80px;top:348px;font:400 14px 'Liberation Sans', sans-serif;line-height:14px;color:#161b26;letter-spacing:0.416px;white-space:nowrap;z-index:5;-webkit-text-stroke:0.2px #161b26;">My Company (San Francisco)</div>
<div style="position:absolute;left:1513.50px;top:347px;font:700 13px 'Liberation Sans', sans-serif;line-height:13px;color:#111111;letter-spacing:-0.052px;white-space:nowrap;z-index:5;">Waiting</div>
<div style="position:absolute;left:148.10px;top:391px;font:700 14px 'Liberation Sans', sans-serif;line-height:14px;color:#111827;letter-spacing:0.927px;white-space:nowrap;z-index:5;">WH/OUT/00017</div>
<div style="position:absolute;left:330.40px;top:391px;font:400 14px 'Liberation Sans', sans-serif;line-height:14px;color:#161b26;letter-spacing:1.231px;white-space:nowrap;z-index:5;-webkit-text-stroke:0.2px #161b26;">OpenWood</div>
<div style="position:absolute;left:702.00px;top:391px;font:700 14px 'Liberation Sans', sans-serif;line-height:14px;color:#a87408;letter-spacing:0.499px;white-space:nowrap;z-index:5;">Today</div>
<div style="position:absolute;left:882.60px;top:391px;font:400 14px 'Liberation Sans', sans-serif;line-height:14px;color:#161b26;letter-spacing:0.324px;white-space:nowrap;z-index:5;-webkit-text-stroke:0.2px #161b26;">S00027</div>
<div style="position:absolute;left:1176.80px;top:391px;font:400 14px 'Liberation Sans', sans-serif;line-height:14px;color:#161b26;letter-spacing:0.416px;white-space:nowrap;z-index:5;-webkit-text-stroke:0.2px #161b26;">My Company (San Francisco)</div>
<div style="position:absolute;left:1513.50px;top:391px;font:700 13px 'Liberation Sans', sans-serif;line-height:13px;color:#ffffff;letter-spacing:-0.497px;white-space:nowrap;z-index:5;">Ready</div>
<div style="position:absolute;left:148.10px;top:435px;font:700 14px 'Liberation Sans', sans-serif;line-height:14px;color:#111827;letter-spacing:0.927px;white-space:nowrap;z-index:5;">WH/OUT/00018</div>
<div style="position:absolute;left:330.40px;top:435px;font:400 14px 'Liberation Sans', sans-serif;line-height:14px;color:#161b26;letter-spacing:1.231px;white-space:nowrap;z-index:5;-webkit-text-stroke:0.2px #161b26;">OpenWood</div>
<div style="position:absolute;left:882.60px;top:435px;font:400 14px 'Liberation Sans', sans-serif;line-height:14px;color:#161b26;letter-spacing:0.324px;white-space:nowrap;z-index:5;-webkit-text-stroke:0.2px #161b26;">S00028</div>
<div style="position:absolute;left:1176.80px;top:435px;font:400 14px 'Liberation Sans', sans-serif;line-height:14px;color:#161b26;letter-spacing:0.416px;white-space:nowrap;z-index:5;-webkit-text-stroke:0.2px #161b26;">My Company (San Francisco)</div>
<div style="position:absolute;left:1513.50px;top:435px;font:700 13px 'Liberation Sans', sans-serif;line-height:13px;color:#ffffff;letter-spacing:0.077px;white-space:nowrap;z-index:5;">Done</div>
<div style="position:absolute;left:148.10px;top:479px;font:700 14px 'Liberation Sans', sans-serif;line-height:14px;color:#111827;letter-spacing:0.927px;white-space:nowrap;z-index:5;">WH/OUT/00026</div>
<div style="position:absolute;left:330.40px;top:479px;font:400 14px 'Liberation Sans', sans-serif;line-height:14px;color:#161b26;letter-spacing:0.730px;white-space:nowrap;z-index:5;-webkit-text-stroke:0.2px #161b26;">Gemini Furniture, Oscar Morgan</div>
<div style="position:absolute;left:702.00px;top:479px;font:700 14px 'Liberation Sans', sans-serif;line-height:14px;color:#a87408;letter-spacing:0.499px;white-space:nowrap;z-index:5;">Today</div>
<div style="position:absolute;left:882.60px;top:479px;font:400 14px 'Liberation Sans', sans-serif;line-height:14px;color:#161b26;letter-spacing:0.324px;white-space:nowrap;z-index:5;-webkit-text-stroke:0.2px #161b26;">S00036</div>
<div style="position:absolute;left:1176.80px;top:479px;font:400 14px 'Liberation Sans', sans-serif;line-height:14px;color:#161b26;letter-spacing:0.416px;white-space:nowrap;z-index:5;-webkit-text-stroke:0.2px #161b26;">My Company (San Francisco)</div>
<div style="position:absolute;left:1513.50px;top:479px;font:700 13px 'Liberation Sans', sans-serif;line-height:13px;color:#111111;letter-spacing:-0.052px;white-space:nowrap;z-index:5;">Waiting</div>
<div style="position:absolute;left:148.10px;top:523px;font:700 14px 'Liberation Sans', sans-serif;line-height:14px;color:#111827;letter-spacing:0.927px;white-space:nowrap;z-index:5;">WH/OUT/00028</div>
<div style="position:absolute;left:330.40px;top:523px;font:400 14px 'Liberation Sans', sans-serif;line-height:14px;color:#161b26;letter-spacing:0.730px;white-space:nowrap;z-index:5;-webkit-text-stroke:0.2px #161b26;">Gemini Furniture, Oscar Morgan</div>
<div style="position:absolute;left:702.00px;top:523px;font:700 14px 'Liberation Sans', sans-serif;line-height:14px;color:#a87408;letter-spacing:0.499px;white-space:nowrap;z-index:5;">Today</div>
<div style="position:absolute;left:882.60px;top:523px;font:400 14px 'Liberation Sans', sans-serif;line-height:14px;color:#161b26;letter-spacing:0.324px;white-space:nowrap;z-index:5;-webkit-text-stroke:0.2px #161b26;">S00041</div>
<div style="position:absolute;left:1176.80px;top:523px;font:400 14px 'Liberation Sans', sans-serif;line-height:14px;color:#161b26;letter-spacing:0.416px;white-space:nowrap;z-index:5;-webkit-text-stroke:0.2px #161b26;">My Company (San Francisco)</div>
<div style="position:absolute;left:1513.50px;top:522px;font:700 13px 'Liberation Sans', sans-serif;line-height:13px;color:#111111;letter-spacing:-0.052px;white-space:nowrap;z-index:5;">Waiting</div>
<div style="position:absolute;left:148.10px;top:567px;font:700 14px 'Liberation Sans', sans-serif;line-height:14px;color:#111827;letter-spacing:0.927px;white-space:nowrap;z-index:5;">WH/OUT/00029</div>
<div style="position:absolute;left:330.40px;top:567px;font:400 14px 'Liberation Sans', sans-serif;line-height:14px;color:#161b26;letter-spacing:0.901px;white-space:nowrap;z-index:5;-webkit-text-stroke:0.2px #161b26;">YourCompany, Mitchell Admin</div>
<div style="position:absolute;left:882.60px;top:567px;font:400 14px 'Liberation Sans', sans-serif;line-height:14px;color:#161b26;letter-spacing:0.324px;white-space:nowrap;z-index:5;-webkit-text-stroke:0.2px #161b26;">S00045</div>
<div style="position:absolute;left:1176.80px;top:567px;font:400 14px 'Liberation Sans', sans-serif;line-height:14px;color:#161b26;letter-spacing:0.416px;white-space:nowrap;z-index:5;-webkit-text-stroke:0.2px #161b26;">My Company (San Francisco)</div>
<div style="position:absolute;left:1513.50px;top:566px;font:700 13px 'Liberation Sans', sans-serif;line-height:13px;color:#ffffff;letter-spacing:0.077px;white-space:nowrap;z-index:5;">Done</div>
<div style="position:absolute;left:148.10px;top:611px;font:700 14px 'Liberation Sans', sans-serif;line-height:14px;color:#111827;letter-spacing:0.927px;white-space:nowrap;z-index:5;">WH/OUT/00030</div>
<div style="position:absolute;left:330.40px;top:611px;font:400 14px 'Liberation Sans', sans-serif;line-height:14px;color:#161b26;letter-spacing:0.901px;white-space:nowrap;z-index:5;-webkit-text-stroke:0.2px #161b26;">YourCompany, Mitchell Admin</div>
<div style="position:absolute;left:882.60px;top:611px;font:400 14px 'Liberation Sans', sans-serif;line-height:14px;color:#161b26;letter-spacing:0.324px;white-space:nowrap;z-index:5;-webkit-text-stroke:0.2px #161b26;">S00046</div>
<div style="position:absolute;left:1176.80px;top:611px;font:400 14px 'Liberation Sans', sans-serif;line-height:14px;color:#161b26;letter-spacing:0.416px;white-space:nowrap;z-index:5;-webkit-text-stroke:0.2px #161b26;">My Company (San Francisco)</div>
<div style="position:absolute;left:1513.50px;top:610px;font:700 13px 'Liberation Sans', sans-serif;line-height:13px;color:#ffffff;letter-spacing:0.077px;white-space:nowrap;z-index:5;">Done</div>
<div style="position:absolute;left:148.10px;top:655px;font:700 14px 'Liberation Sans', sans-serif;line-height:14px;color:#111827;letter-spacing:0.927px;white-space:nowrap;z-index:5;">WH/OUT/00031</div>
<div style="position:absolute;left:330.40px;top:655px;font:400 14px 'Liberation Sans', sans-serif;line-height:14px;color:#161b26;letter-spacing:0.901px;white-space:nowrap;z-index:5;-webkit-text-stroke:0.2px #161b26;">YourCompany, Mitchell Admin</div>
<div style="position:absolute;left:882.60px;top:655px;font:400 14px 'Liberation Sans', sans-serif;line-height:14px;color:#161b26;letter-spacing:0.324px;white-space:nowrap;z-index:5;-webkit-text-stroke:0.2px #161b26;">S00047</div>
<div style="position:absolute;left:1176.80px;top:655px;font:400 14px 'Liberation Sans', sans-serif;line-height:14px;color:#161b26;letter-spacing:0.416px;white-space:nowrap;z-index:5;-webkit-text-stroke:0.2px #161b26;">My Company (San Francisco)</div>
<div style="position:absolute;left:1513.50px;top:654px;font:700 13px 'Liberation Sans', sans-serif;line-height:13px;color:#ffffff;letter-spacing:0.077px;white-space:nowrap;z-index:5;">Done</div>
<div style="position:absolute;left:148.10px;top:699px;font:700 14px 'Liberation Sans', sans-serif;line-height:14px;color:#111827;letter-spacing:0.927px;white-space:nowrap;z-index:5;">WH/OUT/00032</div>
<div style="position:absolute;left:330.40px;top:699px;font:400 14px 'Liberation Sans', sans-serif;line-height:14px;color:#161b26;letter-spacing:0.901px;white-space:nowrap;z-index:5;-webkit-text-stroke:0.2px #161b26;">YourCompany, Mitchell Admin</div>
<div style="position:absolute;left:882.60px;top:699px;font:400 14px 'Liberation Sans', sans-serif;line-height:14px;color:#161b26;letter-spacing:0.324px;white-space:nowrap;z-index:5;-webkit-text-stroke:0.2px #161b26;">S00048</div>
<div style="position:absolute;left:1176.80px;top:699px;font:400 14px 'Liberation Sans', sans-serif;line-height:14px;color:#161b26;letter-spacing:0.416px;white-space:nowrap;z-index:5;-webkit-text-stroke:0.2px #161b26;">My Company (San Francisco)</div>
<div style="position:absolute;left:1513.50px;top:698px;font:700 13px 'Liberation Sans', sans-serif;line-height:13px;color:#ffffff;letter-spacing:0.077px;white-space:nowrap;z-index:5;">Done</div>
<div style="position:absolute;left:148.10px;top:743px;font:700 14px 'Liberation Sans', sans-serif;line-height:14px;color:#111827;letter-spacing:0.927px;white-space:nowrap;z-index:5;">WH/OUT/00033</div>
<div style="position:absolute;left:330.40px;top:743px;font:400 14px 'Liberation Sans', sans-serif;line-height:14px;color:#161b26;letter-spacing:0.901px;white-space:nowrap;z-index:5;-webkit-text-stroke:0.2px #161b26;">YourCompany, Mitchell Admin</div>
<div style="position:absolute;left:702.00px;top:743px;font:700 14px 'Liberation Sans', sans-serif;line-height:14px;color:#a87408;letter-spacing:0.499px;white-space:nowrap;z-index:5;">Today</div>
<div style="position:absolute;left:882.60px;top:743px;font:400 14px 'Liberation Sans', sans-serif;line-height:14px;color:#161b26;letter-spacing:0.324px;white-space:nowrap;z-index:5;-webkit-text-stroke:0.2px #161b26;">S00049</div>
<div style="position:absolute;left:1176.80px;top:743px;font:400 14px 'Liberation Sans', sans-serif;line-height:14px;color:#161b26;letter-spacing:0.416px;white-space:nowrap;z-index:5;-webkit-text-stroke:0.2px #161b26;">My Company (San Francisco)</div>
<div style="position:absolute;left:1513.50px;top:742px;font:700 13px 'Liberation Sans', sans-serif;line-height:13px;color:#ffffff;letter-spacing:-0.497px;white-space:nowrap;z-index:5;">Ready</div>
<div style="position:absolute;left:148.10px;top:786px;font:700 14px 'Liberation Sans', sans-serif;line-height:14px;color:#111827;letter-spacing:0.927px;white-space:nowrap;z-index:5;">WH/OUT/00034</div>
<div style="position:absolute;left:330.40px;top:786px;font:400 14px 'Liberation Sans', sans-serif;line-height:14px;color:#161b26;letter-spacing:0.910px;white-space:nowrap;z-index:5;-webkit-text-stroke:0.2px #161b26;">Azure Interior</div>
<div style="position:absolute;left:702.00px;top:786px;font:700 14px 'Liberation Sans', sans-serif;line-height:14px;color:#a87408;letter-spacing:0.499px;white-space:nowrap;z-index:5;">Today</div>
<div style="position:absolute;left:882.60px;top:786px;font:400 14px 'Liberation Sans', sans-serif;line-height:14px;color:#161b26;letter-spacing:0.324px;white-space:nowrap;z-index:5;-webkit-text-stroke:0.2px #161b26;">S00050</div>
<div style="position:absolute;left:1176.80px;top:786px;font:400 14px 'Liberation Sans', sans-serif;line-height:14px;color:#161b26;letter-spacing:0.416px;white-space:nowrap;z-index:5;-webkit-text-stroke:0.2px #161b26;">My Company (San Francisco)</div>
<div style="position:absolute;left:1513.50px;top:786px;font:700 13px 'Liberation Sans', sans-serif;line-height:13px;color:#ffffff;letter-spacing:-0.497px;white-space:nowrap;z-index:5;">Ready</div>
<div style="position:absolute;left:148.10px;top:830px;font:700 14px 'Liberation Sans', sans-serif;line-height:14px;color:#111827;letter-spacing:0.927px;white-space:nowrap;z-index:5;">WH/OUT/00035</div>
<div style="position:absolute;left:330.40px;top:830px;font:400 14px 'Liberation Sans', sans-serif;line-height:14px;color:#161b26;letter-spacing:0.910px;white-space:nowrap;z-index:5;-webkit-text-stroke:0.2px #161b26;">Azure Interior</div>
<div style="position:absolute;left:882.60px;top:830px;font:400 14px 'Liberation Sans', sans-serif;line-height:14px;color:#161b26;letter-spacing:0.324px;white-space:nowrap;z-index:5;-webkit-text-stroke:0.2px #161b26;">S00051</div>
<div style="position:absolute;left:1176.80px;top:830px;font:400 14px 'Liberation Sans', sans-serif;line-height:14px;color:#161b26;letter-spacing:0.416px;white-space:nowrap;z-index:5;-webkit-text-stroke:0.2px #161b26;">My Company (San Francisco)</div>
<div style="position:absolute;left:1513.50px;top:830px;font:700 13px 'Liberation Sans', sans-serif;line-height:13px;color:#ffffff;letter-spacing:0.077px;white-space:nowrap;z-index:5;">Done</div>
<div style="position:absolute;left:148.10px;top:874px;font:700 14px 'Liberation Sans', sans-serif;line-height:14px;color:#111827;letter-spacing:0.927px;white-space:nowrap;z-index:5;">WH/OUT/00036</div>
<div style="position:absolute;left:330.40px;top:874px;font:400 14px 'Liberation Sans', sans-serif;line-height:14px;color:#161b26;letter-spacing:0.910px;white-space:nowrap;z-index:5;-webkit-text-stroke:0.2px #161b26;">Azure Interior</div>
<div style="position:absolute;left:882.60px;top:874px;font:400 14px 'Liberation Sans', sans-serif;line-height:14px;color:#161b26;letter-spacing:0.324px;white-space:nowrap;z-index:5;-webkit-text-stroke:0.2px #161b26;">S00052</div>
<div style="position:absolute;left:1176.80px;top:874px;font:400 14px 'Liberation Sans', sans-serif;line-height:14px;color:#161b26;letter-spacing:0.416px;white-space:nowrap;z-index:5;-webkit-text-stroke:0.2px #161b26;">My Company (San Francisco)</div>
<div style="position:absolute;left:1513.50px;top:874px;font:700 13px 'Liberation Sans', sans-serif;line-height:13px;color:#ffffff;letter-spacing:0.077px;white-space:nowrap;z-index:5;">Done</div>
<div style="position:absolute;left:148.10px;top:918px;font:700 14px 'Liberation Sans', sans-serif;line-height:14px;color:#111827;letter-spacing:0.927px;white-space:nowrap;z-index:5;">WH/OUT/00037</div>
<div style="position:absolute;left:330.40px;top:918px;font:400 14px 'Liberation Sans', sans-serif;line-height:14px;color:#161b26;letter-spacing:0.910px;white-space:nowrap;z-index:5;-webkit-text-stroke:0.2px #161b26;">Azure Interior</div>
<div style="position:absolute;left:882.60px;top:918px;font:400 14px 'Liberation Sans', sans-serif;line-height:14px;color:#161b26;letter-spacing:0.324px;white-space:nowrap;z-index:5;-webkit-text-stroke:0.2px #161b26;">S00053</div>
<div style="position:absolute;left:1176.80px;top:918px;font:400 14px 'Liberation Sans', sans-serif;line-height:14px;color:#161b26;letter-spacing:0.416px;white-space:nowrap;z-index:5;-webkit-text-stroke:0.2px #161b26;">My Company (San Francisco)</div>
<div style="position:absolute;left:1513.50px;top:917px;font:700 13px 'Liberation Sans', sans-serif;line-height:13px;color:#ffffff;letter-spacing:0.077px;white-space:nowrap;z-index:5;">Done</div>
<div style="position:absolute;left:1159.30px;top:118px;font:400 14px 'Liberation Sans', sans-serif;line-height:14px;color:#161b26;letter-spacing:1.226px;white-space:nowrap;z-index:22;-webkit-text-stroke:0.2px #161b26;">Export</div>
<div style="position:absolute;left:1159.30px;top:148px;font:400 14px 'Liberation Sans', sans-serif;line-height:14px;color:#161b26;letter-spacing:0.965px;white-space:nowrap;z-index:22;-webkit-text-stroke:0.2px #161b26;">Duplicate</div>
<div style="position:absolute;left:1159.30px;top:177px;font:400 14px 'Liberation Sans', sans-serif;line-height:14px;color:#d6402f;letter-spacing:1.143px;white-space:nowrap;z-index:22;-webkit-text-stroke:0.2px #d6402f;">Delete</div>
<div style="position:absolute;left:1135.70px;top:226px;font:400 14px 'Liberation Sans', sans-serif;line-height:14px;color:#161b26;letter-spacing:0.597px;white-space:nowrap;z-index:22;-webkit-text-stroke:0.2px #161b26;">Send email</div>
<div style="position:absolute;left:1135.70px;top:255px;font:400 14px 'Liberation Sans', sans-serif;line-height:14px;color:#161b26;letter-spacing:0.962px;white-space:nowrap;z-index:22;-webkit-text-stroke:0.2px #161b26;">Validate</div>
<div style="position:absolute;left:1134.70px;top:285px;font:400 14px 'Liberation Sans', sans-serif;line-height:14px;color:#161b26;letter-spacing:0.746px;white-space:nowrap;z-index:22;-webkit-text-stroke:0.2px #161b26;">Mass Label Printing</div>
<div style="position:absolute;left:1513.20px;top:15px;font:700 12px 'Liberation Sans', sans-serif;line-height:12px;color:#ffffff;letter-spacing:-1.474px;white-space:nowrap;z-index:8;">12</div>
<div style="position:absolute;left:1560.70px;top:15px;font:700 12px 'Liberation Sans', sans-serif;line-height:12px;color:#ffffff;letter-spacing:-1.074px;white-space:nowrap;z-index:8;">10</div>
</body></html>
